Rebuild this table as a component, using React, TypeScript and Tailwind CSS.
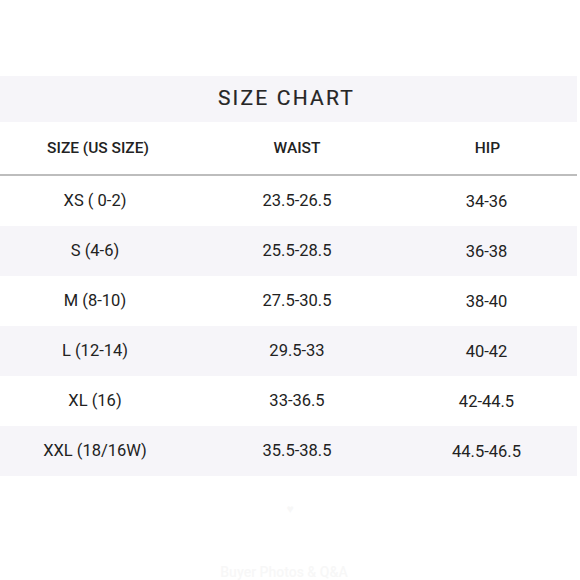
const rows = [
  ['XS ( 0-2)', '23.5-26.5', '34-36'],
  ['S (4-6)', '25.5-28.5', '36-38'],
  ['M (8-10)', '27.5-30.5', '38-40'],
  ['L (12-14)', '29.5-33', '40-42'],
  ['XL (16)', '33-36.5', '42-44.5'],
  ['XXL (18/16W)', '35.5-38.5', '44.5-46.5'],
];

export default function App() {
  return (
    <div className="w-[580px] h-[580px] bg-white overflow-hidden font-['Roboto',sans-serif] text-[#222]">
      <div className="w-[577px] pt-[76px]">
        {/* Title */}
        <div className="h-[46px] bg-[#f6f5f9] flex items-center justify-center">
          <h2 className="text-[21px] tracking-[2.2px] text-[#262626] pr-[4px] [-webkit-text-stroke:0.2px_#262626]">SIZE CHART</h2>
        </div>

        {/* Header */}
        <div className="h-[54px] grid grid-cols-[196px_202px_179px] items-center text-[15.5px] font-medium text-[#222] border-b-2 border-[#bdbdbd]">
          <div className="text-center pt-[2px]">SIZE (US SIZE)</div>
          <div className="text-center pt-[2px]">WAIST</div>
          <div className="text-center pt-[2px]">HIP</div>
        </div>

        {/* Rows */}
        {rows.map((r, i) => (
          <div
            key={r[0]}
            className={`h-[50px] grid grid-cols-[196px_202px_179px] items-center text-[16.5px] ${
              i % 2 === 1 ? 'bg-[#f6f5f9]' : 'bg-white'
            }`}
          >
            <div className="text-center pr-[6px]">{r[0]}</div>
            <div className="text-center">{r[1]}</div>
            <div className="text-center pt-[2px] pr-[2px]">{r[2]}</div>
          </div>
        ))}
      </div>

      {/* faint content behind the overlay */}
      <div className="flex flex-col items-center pt-[24px] text-[#f7f7f7]">
        <span className="text-[12px]">♥</span>
        <span className="mt-[44px] text-[14px] font-medium pr-[12px]">Buyer Photos &amp; Q&amp;A</span>
      </div>
    </div>
  );
}
